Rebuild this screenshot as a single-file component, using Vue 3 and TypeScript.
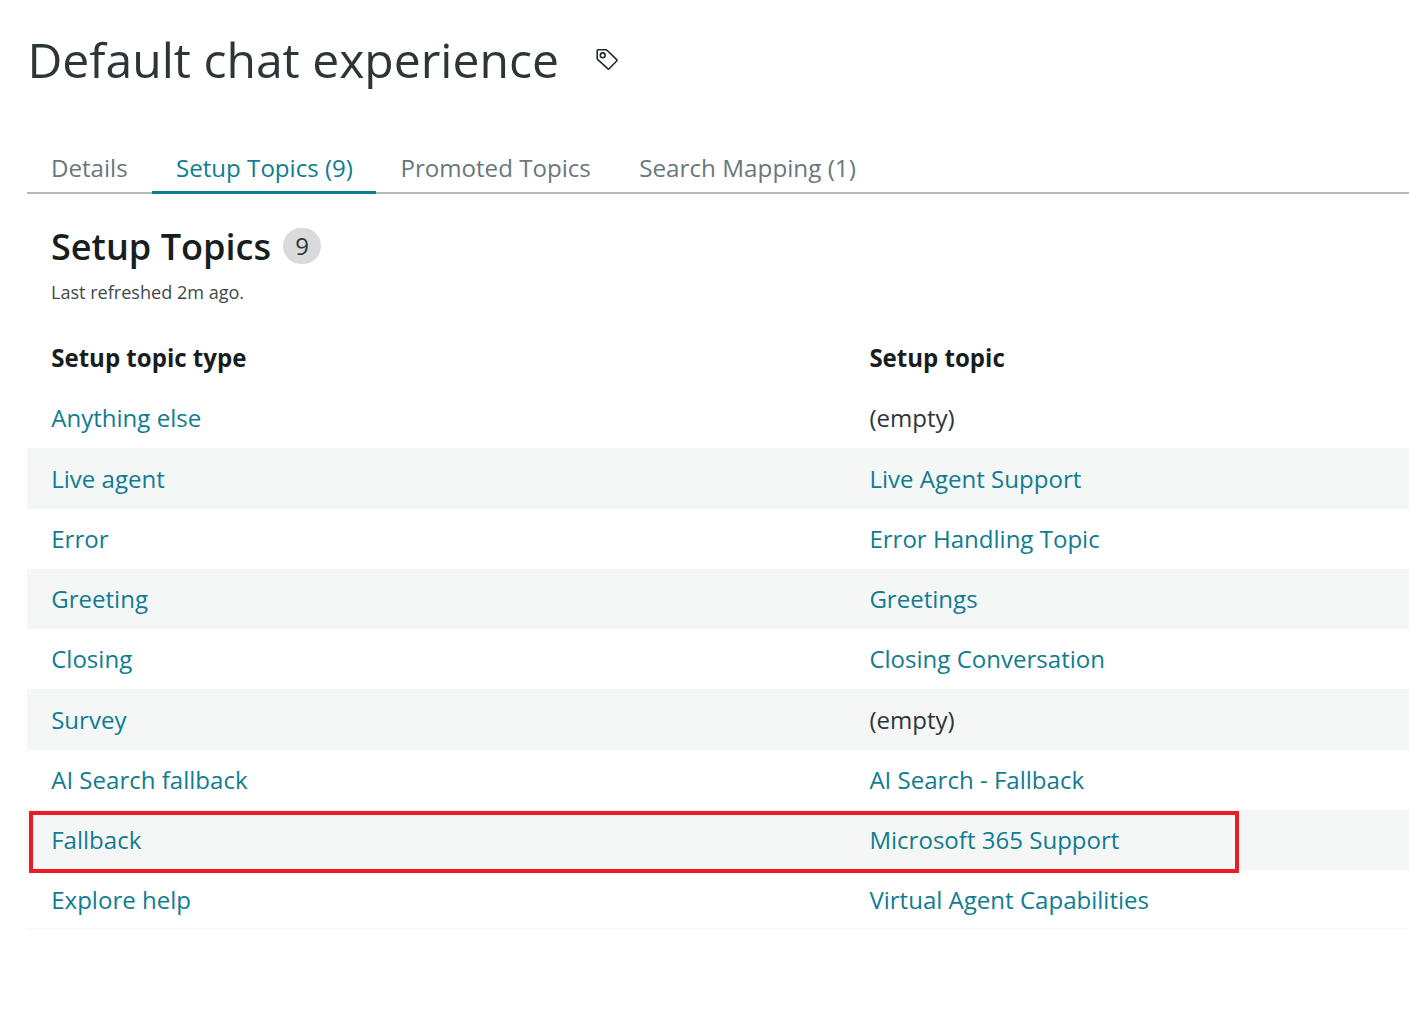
<script setup lang="ts">
interface Tab { label: string; active?: boolean; width: number }
interface Row { type: string; topic: string }
const tabs: Tab[] = [
  { label: 'Details', width: 77 },
  { label: 'Setup Topics (9)', active: true, width: 176.4 },
  { label: 'Promoted Topics', width: 190.8 },
  { label: 'Search Mapping (1)', width: 218 },
]
const rows: Row[] = [
  { type: 'Anything else', topic: '' },
  { type: 'Live agent', topic: 'Live Agent Support' },
  { type: 'Error', topic: 'Error Handling Topic' },
  { type: 'Greeting', topic: 'Greetings' },
  { type: 'Closing', topic: 'Closing Conversation' },
  { type: 'Survey', topic: '' },
  { type: 'AI Search fallback', topic: 'AI Search - Fallback' },
  { type: 'Fallback', topic: 'Microsoft 365 Support' },
  { type: 'Explore help', topic: 'Virtual Agent Capabilities' },
]
</script>

<template>
  <main class="page">
    <header class="title-bar">
      <h1>Default chat experience</h1>
      <svg class="tag" viewBox="0 0 24 24" width="24" height="24" fill="none" stroke="#22292b" stroke-width="1.6" stroke-linejoin="round">
        <path d="M3.2 1.8H10.7Q11.6 1.8 12.3 2.5L21.7 11.6Q22.4 12.3 21.7 13L14.1 20.7Q13.4 21.4 12.7 20.7L2.8 11.6Q2.2 11 2.2 10.2V2.8Q2.2 1.8 3.2 1.8Z" />
        <circle cx="7.7" cy="7.3" r="2.4" />
      </svg>
    </header>
    <nav class="tabs">
      <a v-for="t in tabs" :key="t.label" class="tab" :class="{ active: t.active }" :style="{ width: t.width + 'px' }">{{ t.label }}</a>
    </nav>
    <section>
      <div class="heading"><h2>Setup Topics</h2><span class="badge">9</span></div>
      <p class="refreshed">Last refreshed 2m ago.</p>
      <div class="grid">
        <div class="row head"><span>Setup topic type</span><span>Setup topic</span></div>
        <div v-for="r in rows" :key="r.type" class="row" :class="{ marked: r.type === 'Fallback' }">
          <a>{{ r.type }}</a>
          <a v-if="r.topic">{{ r.topic }}</a>
          <span v-else>(empty)</span>
        </div>
      </div>
    </section>
  </main>
</template>

<style>
body { margin: 0; background: #fff; overflow: hidden; }
</style>
<style scoped>
.page { height: 1025px; padding-left: 27px; box-sizing: border-box; font-family: "Open Sans", sans-serif; color: #2e3538; overflow: hidden; white-space: nowrap; }
.title-bar { display: flex; align-items: center; height: 120px; padding-left: 0.5px; }
h1 { margin: 0; font-size: 48.05px; font-weight: 400; line-height: 64px; }
.tag { margin-left: 36.3px; }
.tabs { display: flex; height: 73.5px; box-sizing: border-box; align-items: flex-end; border-bottom: 2px solid #b3bbbc; }
.tab { height: 46px; margin-bottom: -2px; padding: 0 24px; line-height: 46px; font-size: 24.1px; color: #68787b; border-bottom: 3px solid transparent; }
.tab:last-child { font-size: 24.25px; }
.tab.active { color: #107c91; border-bottom-color: #107c91; }
.heading { display: flex; align-items: center; height: 54px; padding: 26px 0 0 24px; }
h2 { margin: -2px 0 0; font-size: 36.1px; line-height: 50px; font-weight: 600; color: #171e20; }
.badge { width: 38px; height: 36px; margin: -2px 0 0 12px; border-radius: 18px; background: #dadada; font-size: 24px; line-height: 35px; text-align: center; }
.refreshed { margin: 6px 0 0 24px; font-size: 18.07px; line-height: 24px; color: #40484b; }
.grid { margin-top: 24.4px; }
.row { position: relative; display: grid; grid-template-columns: 818.2px 1fr; box-sizing: border-box; height: 60.25px; padding: 0.2px 0 0 24.2px; align-items: center; font-size: 24.05px; line-height: 34px; }
.row:nth-child(odd):not(.head) { background: #f5f7f7; }
.row:last-child { background: linear-gradient(to top, #f7f8f8, #fff 4px); }
.head { font-weight: 700; color: #171e20; }
a { color: #107c91; }
.marked::after { content: ""; position: absolute; left: 1.5px; top: 1px; width: 1210.5px; height: 62px; box-sizing: border-box; border: 4px solid #ed1c24; z-index: 1; }
</style>
